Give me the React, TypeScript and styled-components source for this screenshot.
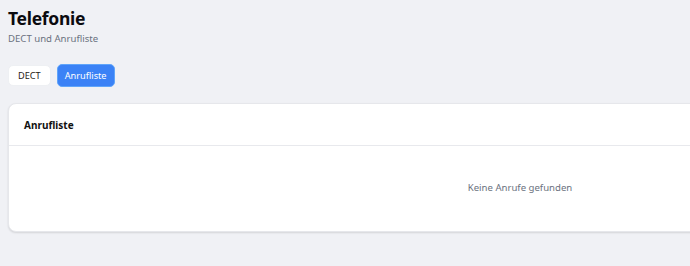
import React from "react";
import styled, { createGlobalStyle } from "styled-components";

const Global = createGlobalStyle`
  html, body { margin: 0; padding: 0; background: #f0f1f5; }
  body { font-family: "Noto Sans", "Open Sans", sans-serif; color: #111827; }
`;

const Page = styled.div`
  padding: 6px 8px 8px 8px;
  width: 1024px;
`;

const Title = styled.h1`
  margin: 0;
  font-size: 17.5px;
  line-height: 24px;
  font-weight: 700;
  color: #0b0b0f;
  letter-spacing: -0.3px;
`;

const Subtitle = styled.p`
  margin: 2px 0 0 0;
  font-size: 9.6px;
  line-height: 14px;
  color: #6b7280;
`;

const Tabs = styled.div`
  display: flex;
  gap: 6px;
  margin-top: 18px;
  align-items: center;
`;

const Tab = styled.button<{ $active?: boolean }>`
  font-family: inherit;
  font-size: 9.2px;
  height: ${(p) => (p.$active ? "23px" : "21px")};
  padding: 0 ${(p) => (p.$active ? "7px" : "9px")};
  border-radius: 5px;
  border: 1px solid ${(p) => (p.$active ? "#60a5fa" : "#eef0f3")};
  background: ${(p) => (p.$active ? "#3b82f6" : "#ffffff")};
  color: ${(p) => (p.$active ? "#ffffff" : "#1f1a14")};
  cursor: pointer;
`;

const Card = styled.section`
  margin-top: 16px;
  background: #fff;
  border-radius: 8px;
  border: 1px solid #e6e7eb;
  box-shadow: 0 1px 2px rgba(0, 0, 0, 0.12);
`;

const CardHeader = styled.div`
  padding: 14px 15px 13px;
  border-bottom: 1px solid #e8e9ed;
  font-size: 10px;
  line-height: 14px;
  font-weight: 700;
  color: #111;
`;

const Empty = styled.div`
  padding: 35px 0 36px;
  text-align: center;
  font-size: 9.6px;
  line-height: 14px;
  color: #6b7280;
`;

export default function App() {
  return (
    <>
      <Global />
      <Page>
        <Title>Telefonie</Title>
        <Subtitle>DECT und Anrufliste</Subtitle>
        <Tabs>
          <Tab>DECT</Tab>
          <Tab $active>Anrufliste</Tab>
        </Tabs>
        <Card>
          <CardHeader>Anrufliste</CardHeader>
          <Empty>Keine Anrufe gefunden</Empty>
        </Card>
      </Page>
    </>
  );
}
